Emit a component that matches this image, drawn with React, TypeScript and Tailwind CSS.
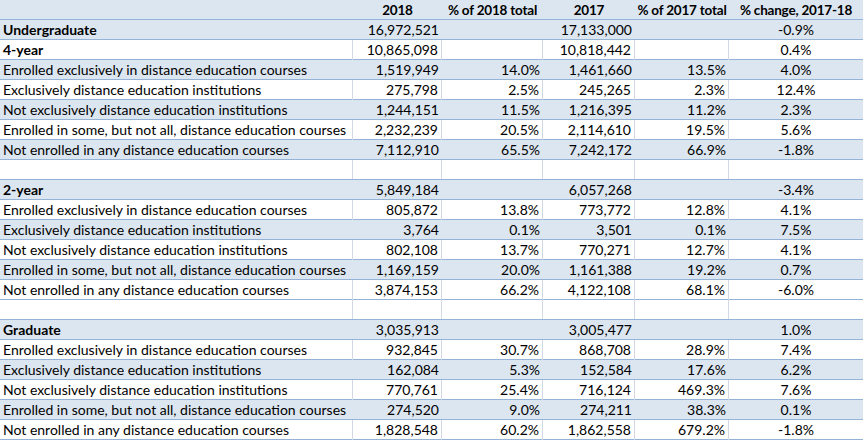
import React from 'react';

type Row = {
  label: string;
  bold?: boolean;
  blue?: boolean;
  cells: string[];
};

const COLS = ['2018', '% of 2018 total', '2017', '% of 2017 total', '% change, 2017-18'];

const ROWS: Row[] = [
  { label: 'Undergraduate', bold: true, blue: true, cells: ['16,972,521', '', '17,133,000', '', '-0.9%'] },
  { label: '4-year', bold: true, cells: ['10,865,098', '', '10,818,442', '', '0.4%'] },
  { label: 'Enrolled exclusively in distance education courses', blue: true, cells: ['1,519,949', '14.0%', '1,461,660', '13.5%', '4.0%'] },
  { label: 'Exclusively distance education institutions', cells: ['275,798', '2.5%', '245,265', '2.3%', '12.4%'] },
  { label: 'Not exclusively distance education institutions', blue: true, cells: ['1,244,151', '11.5%', '1,216,395', '11.2%', '2.3%'] },
  { label: 'Enrolled in some, but not all, distance education courses', cells: ['2,232,239', '20.5%', '2,114,610', '19.5%', '5.6%'] },
  { label: 'Not enrolled in any distance education courses', blue: true, cells: ['7,112,910', '65.5%', '7,242,172', '66.9%', '-1.8%'] },
  { label: '', cells: ['', '', '', '', ''] },
  { label: '2-year', bold: true, blue: true, cells: ['5,849,184', '', '6,057,268', '', '-3.4%'] },
  { label: 'Enrolled exclusively in distance education courses', cells: ['805,872', '13.8%', '773,772', '12.8%', '4.1%'] },
  { label: 'Exclusively distance education institutions', blue: true, cells: ['3,764', '0.1%', '3,501', '0.1%', '7.5%'] },
  { label: 'Not exclusively distance education institutions', cells: ['802,108', '13.7%', '770,271', '12.7%', '4.1%'] },
  { label: 'Enrolled in some, but not all, distance education courses', blue: true, cells: ['1,169,159', '20.0%', '1,161,388', '19.2%', '0.7%'] },
  { label: 'Not enrolled in any distance education courses', cells: ['3,874,153', '66.2%', '4,122,108', '68.1%', '-6.0%'] },
  { label: '', cells: ['', '', '', '', ''] },
  { label: 'Graduate', bold: true, blue: true, cells: ['3,035,913', '', '3,005,477', '', '1.0%'] },
  { label: 'Enrolled exclusively in distance education courses', cells: ['932,845', '30.7%', '868,708', '28.9%', '7.4%'] },
  { label: 'Exclusively distance education institutions', blue: true, cells: ['162,084', '5.3%', '152,584', '17.6%', '6.2%'] },
  { label: 'Not exclusively distance education institutions', cells: ['770,761', '25.4%', '716,124', '469.3%', '7.6%'] },
  { label: 'Enrolled in some, but not all, distance education courses', blue: true, cells: ['274,520', '9.0%', '274,211', '38.3%', '0.1%'] },
  { label: 'Not enrolled in any distance education courses', cells: ['1,828,548', '60.2%', '1,862,558', '679.2%', '-1.8%'] },
];

const GRID = 'grid grid-cols-[353px_89px_101px_92px_94px_134px]';

export default function App() {
  return (
    <div
      className="w-[863px] h-[440px] bg-white text-black text-[14px] leading-[20px] overflow-hidden"
      style={{ fontFamily: 'Lato, "Open Sans", sans-serif' }}
    >
      {/* Header */}
      <div className={`${GRID} h-[20px] bg-[#dce6f1] border-b border-[#95b3d7] font-bold text-[13.5px] tracking-[-0.2px]`}>
        <div />
        {COLS.map(c => (
          <div key={c} className="text-center whitespace-nowrap">{c}</div>
        ))}
      </div>

      {ROWS.map((r, i) => (
        <div
          key={i}
          className={`${GRID} h-[20px] border-b border-[#95b3d7] ${r.blue ? 'bg-[#dce6f1]' : 'bg-white'}`}
        >
          <div className={`pl-[3px] whitespace-nowrap ${r.bold ? 'font-bold' : ''} ${r.blue ? '' : 'border-r border-[#d0d7e5]'}`}>
            {r.label}
          </div>
          {r.cells.map((c, j) => (
            <div
              key={j}
              className={`whitespace-nowrap ${j === 4 ? 'text-center' : 'text-right pr-[3px]'} ${
                r.blue || j === 4 ? '' : 'border-r border-[#d0d7e5]'
              }`}
            >
              {c}
            </div>
          ))}
        </div>
      ))}
    </div>
  );
}
